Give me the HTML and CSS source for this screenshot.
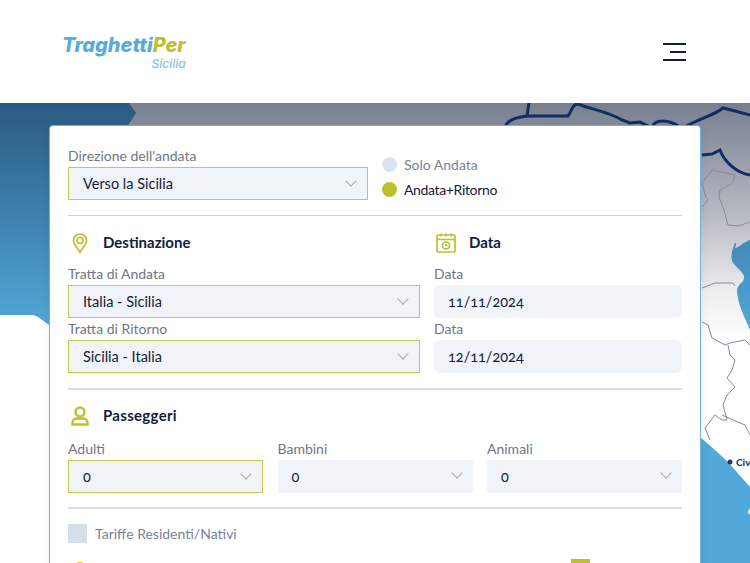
FILE: index.html
```html
<!DOCTYPE html>
<html lang="it">

<head>
    <meta charset="UTF-8">
    <meta name="viewport" content="width=device-width, initial-scale=1.0">
    <title>TraghettiPer Sicilia</title>
    <link rel="stylesheet" href="styles.css">
</head>

<body>
    <header class="site-header">
        <a href="#" class="logo">
            <span class="logo-main">Traghetti<span class="logo-per">Per</span></span>
            <span class="logo-sub">Sicilia</span>
        </a>
        <button class="menu-toggle" aria-label="Menu"><span></span><span class="short"></span><span></span></button>
    </header>

    <main class="hero">
        <svg class="map" viewBox="0 0 750 460" aria-hidden="true">
            <defs>
                <linearGradient id="sea" x1="0" y1="0" x2="0" y2="1">
                    <stop offset="0" stop-color="#2a5a82" />
                    <stop offset="1" stop-color="#52a8d8" />
                </linearGradient>
                <linearGradient id="land" x1="0" y1="0" x2="0" y2="1">
                    <stop offset="0" stop-color="#787f90" />
                    <stop offset="0.45" stop-color="#b4b8c0" />
                    <stop offset="0.8" stop-color="#efefef" />
                    <stop offset="1" stop-color="#ffffff" />
                </linearGradient>
                <linearGradient id="gulf" x1="0" y1="0" x2="0" y2="1">
                    <stop offset="0" stop-color="#4589b6" />
                    <stop offset="1" stop-color="#52a8d8" />
                </linearGradient>
            </defs>
            <rect width="750" height="460" fill="#ffffff" />
            <rect width="140" height="225" fill="url(#sea)" />
            <path d="M0 212 L33 212 L38 214 L49 222 L60 230 L60 240 L0 240 Z" fill="#ffffff" />
            <path d="M129 0 L136 10 L127 24 L700 24 L700 240 L750 240 L750 0 Z" fill="url(#land)" />
            <path d="M750 137 C742 140 738 145 735 145 C736 141 737 139 735 140 C732 146 730 155 733 160 C737 165 742 168 744 173 C745 180 738 180 737 187 C737 200 745 215 750 227 Z" fill="url(#gulf)" />
            <path d="M700 334 L715 347 L728 359 L750 384 L750 460 L700 460 Z" fill="#52a8d8" />
            <path d="M750 405 L748 409 L750 412 Z" fill="#ffffff" />
            <circle cx="730" cy="359" r="2.500" fill="#1c3f70" />
            <g fill="none" stroke="#0f2f66" stroke-width="3">
                <path d="M505 24 C508 16 516 15 527 13 L529 0" />
                <path d="M527 13 L568 13 C572 8 572 1 578 1 C590 6 610 9 622 17 L630 20 L640 19 L650 24" />
                <path d="M652 24 C655 16 668 16 680 24" />
                <path d="M685 24 C698 16 715 12 723 5 L735 8 L750 12" />
                <path d="M702 52 L712 51 L720 47 C724 58 736 70 750 72" />
            </g>
            <g fill="none" stroke="#848c9c" stroke-width="1">
                <path d="M702 80 L712 67 L722 69 L735 72 L733 80 L720 87 L719 94 L724 107 L728 122 L738 123 L750 119" />
                <path d="M702 80 L705 92 L708 97 L702 104" />
                <path d="M702 185 L715 180 L733 180 L735 183" />
                <path d="M702 219 L708 222 L712 235 L725 242 L730 240 L745 237 L750 242" />
                <path d="M728 242 L730 252 L735 257 L732 267 L727 275 L735 284 L727 292 L723 302 L727 317 L722 317 L715 312 L705 325 L710 337" />
                <path d="M722 312 L733 317 L745 322 L750 332" />
            </g>
        </svg>
        <span class="map-city">Civ</span>

        <form class="booking-card">
            <div class="direction-row">
                <div class="field">
                    <label>Direzione dell'andata</label>
                    <div class="select active">Verso la Sicilia</div>
                </div>
                <div class="radios">
                    <div class="radio"><span class="dot"></span>Solo Andata</div>
                    <div class="radio checked"><span class="dot"></span>Andata+Ritorno</div>
                </div>
            </div>

            <hr>

            <div class="route-grid">
                <h3 class="section-title">
                    <svg viewBox="0 0 18 20"><path d="M9 19.500 C6 14 2.500 11 2.500 7.500 A6.500 6.500 0 0 1 15.500 7.500 C15.500 11 12 14 9 19.500 Z" /><circle cx="9" cy="7.500" r="3" /></svg>
                    Destinazione
                </h3>
                <h3 class="section-title">
                    <svg viewBox="0 0 20 20" class="wide"><rect x="1" y="2" width="18" height="17" rx="1" /><path d="M1 6.500 H19 M5 0.500 V3.500 M10 0.500 V3.500 M15 0.500 V3.500" /><circle cx="10" cy="12.500" r="3.500" /><path d="M10 11 V12.500 H11.500" /></svg>
                    Data
                </h3>
                <div class="field">
                    <label>Tratta di Andata</label>
                    <div class="select active">Italia - Sicilia</div>
                </div>
                <div class="field">
                    <label>Data</label>
                    <div class="date-input">11/11/2024</div>
                </div>
                <div class="field">
                    <label>Tratta di Ritorno</label>
                    <div class="select active">Sicilia - Italia</div>
                </div>
                <div class="field">
                    <label>Data</label>
                    <div class="date-input">12/11/2024</div>
                </div>
            </div>

            <hr class="thick">

            <h3 class="section-title pax-title">
                <svg viewBox="0 0 18 20" class="bold"><circle cx="9" cy="6" r="4.500" /><path d="M1.500 18.500 V17 C1.500 14 4 12.500 6 12.500 H12 C14 12.500 16.500 14 16.500 17 V18.500 Z" /></svg>
                Passeggeri
            </h3>
            <div class="pax-grid">
                <div class="field">
                    <label>Adulti</label>
                    <div class="select active">0</div>
                </div>
                <div class="field">
                    <label>Bambini</label>
                    <div class="select">0</div>
                </div>
                <div class="field">
                    <label>Animali</label>
                    <div class="select">0</div>
                </div>
            </div>

            <hr class="thick tight">

            <div class="checkbox"><span class="box"></span>Tariffe Residenti/Nativi</div>
            <div class="bottom-row">
                <span class="bottom-dot"></span>
                <span class="bottom-box"></span>
            </div>
        </form>
    </main>
</body>

</html>
```

FILE: styles.css
```css
* {
    margin: 0;
    padding: 0;
    box-sizing: border-box;
}

html,
body {
    height: 563px;
    overflow: hidden;
}

body {
    font-family: 'Lato', 'Open Sans', sans-serif;
    color: #14203a;
    background-color: #fff;
}

.site-header {
    height: 103px;
    display: flex;
    justify-content: space-between;
    align-items: center;
    padding: 0 64px 0 62px;
    background-color: #fff;
}

.logo {
    display: flex;
    flex-direction: column;
    align-items: flex-end;
    text-decoration: none;
    font-family: 'Inter', 'Lato', sans-serif;
    font-style: italic;
    margin-top: 3px;
}

.logo-main {
    font-size: 20px;
    line-height: 20px;
    font-weight: 800;
    color: #55abdc;
}

.logo-per {
    color: #bcc02e;
}

.logo-sub {
    font-size: 12px;
    line-height: 14px;
    margin-top: 2px;
    font-weight: 500;
    color: #83c1e6;
}

.menu-toggle {
    width: 23px;
    display: flex;
    flex-direction: column;
    align-items: flex-end;
    gap: 6px;
    background: none;
    border: none;
}

.menu-toggle span {
    display: block;
    width: 100%;
    height: 2px;
    background-color: #14203a;
}

.menu-toggle .short {
    width: 16px;
}

.hero {
    position: relative;
    height: 460px;
    padding: 22px 49px 0;
}

.map {
    position: absolute;
    top: 0;
    left: 0;
    width: 100%;
    height: 100%;
}

.map-city {
    position: absolute;
    top: 353px;
    left: 736px;
    font-size: 10px;
    line-height: 13px;
    font-weight: 900;
    color: #1c3f70;
}

.booking-card {
    position: relative;
    height: 460px;
    padding: 20px 18px 0;
    background-color: #fff;
    border: 1px solid #6fb2de;
    border-radius: 4px 4px 0 0;
    box-shadow: 0 0 12px rgba(0, 0, 0, 0.06);
}

.direction-row {
    display: flex;
    gap: 14px;
}

.direction-row .field {
    width: 300px;
}

.radios {
    display: flex;
    flex-direction: column;
    gap: 8px;
    padding-top: 10px;
}

.radio {
    display: flex;
    align-items: center;
    gap: 7px;
    height: 17px;
    font-size: 14px;
    color: #7a8294;
}

.radio .dot {
    width: 15px;
    height: 15px;
    border-radius: 50%;
    background-color: #d9e5ee;
}

.radio.checked {
    color: #14203a;
    letter-spacing: -0.35px;
}

.radio.checked .dot {
    background-color: #bcc02e;
}

.field label {
    display: block;
    font-size: 14px;
    line-height: 19px;
    padding-bottom: 2px;
    color: #6f7687;
}

.select,
.date-input {
    position: relative;
    height: 33px;
    display: flex;
    align-items: center;
    font-size: 14.500px;
    color: #14203a;
    background-color: #f0f4f8;
    font-variant-numeric: oldstyle-nums;
}

.select {
    padding-left: 14px;
}

.select::after {
    content: "";
    position: absolute;
    top: 9px;
    right: 12px;
    width: 7px;
    height: 7px;
    border-right: 1px solid #a4a9b3;
    border-bottom: 1px solid #a4a9b3;
    transform: rotate(45deg);
}

.select.active {
    border: 1px solid #c6c94f;
}

.date-input {
    padding-left: 14px;
    border-radius: 6px;
}

hr {
    border: none;
    border-top: 1px solid #cfcfcf;
    margin: 15px 0 0;
}

hr.thick {
    border-top: 2px solid #dcdcdc;
}

hr.tight {
    margin-top: 14px;
}

.section-title {
    display: flex;
    align-items: center;
    gap: 14px;
    height: 20px;
    padding-left: 3px;
    padding-bottom: 2px;
    font-size: 15px;
    font-weight: 700;
    color: #14203a;
}

.section-title svg {
    width: 18px;
    height: 20px;
    margin-bottom: -2px;
    fill: none;
    stroke: #bcc02e;
    stroke-width: 1.700;
}

.section-title svg.wide {
    width: 20px;
    margin-left: -1px;
    margin-right: -1px;
}

.section-title svg.bold {
    stroke-width: 2.500;
}

.route-grid {
    display: grid;
    grid-template-columns: 352px 248px;
    column-gap: 14px;
    row-gap: 1px;
    padding-top: 17px;
}

.route-grid .section-title {
    margin-bottom: 10px;
}

.pax-title {
    margin-top: 16px;
    letter-spacing: 0.3px;
}

.pax-grid {
    display: grid;
    grid-template-columns: repeat(3, 1fr);
    column-gap: 14.500px;
    margin-top: 13px;
}

.checkbox {
    display: flex;
    align-items: center;
    gap: 8px;
    margin-top: 15px;
    height: 19px;
    font-size: 14px;
    color: #7a8294;
}

.checkbox .box {
    width: 19px;
    height: 19px;
    background-color: #d3e0ea;
}

.bottom-row {
    display: flex;
    margin-top: 16px;
    padding-left: 5px;
}

.bottom-dot {
    width: 14px;
    height: 14px;
    margin-top: 3px;
    border: 2px solid #bcc02e;
    border-radius: 50%;
}

.bottom-box {
    width: 19px;
    height: 19px;
    margin-left: 484px;
    background-color: #bcc02e;
}
```
